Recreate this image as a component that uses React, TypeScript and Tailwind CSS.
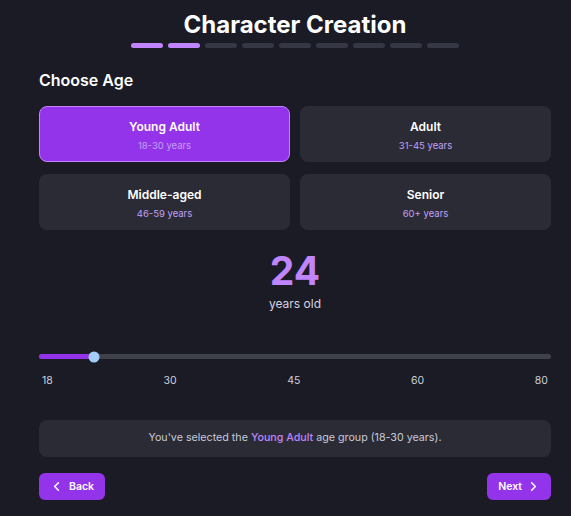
import { ChevronLeft, ChevronRight } from "lucide-react";

const groups = [
  { name: "Young Adult", range: "18-30 years", selected: true },
  { name: "Adult", range: "31-45 years" },
  { name: "Middle-aged", range: "46-59 years" },
  { name: "Senior", range: "60+ years" },
];

const steps = [true, true, false, false, false, false, false, false, false];

export default function App() {
  const age = 24;
  const pct = ((age - 18) / (80 - 18)) * 100 + 1;

  return (
    <div
      className="min-h-[516px] w-full bg-[#1a1b25] text-white"
      style={{ fontFamily: "Inter, 'Noto Sans', sans-serif" }}
    >
      <div className="pl-[39px] pr-[20px] pt-[9px] pb-4">
        <h1 className="text-center text-[24px] font-bold leading-8">Character Creation</h1>
        <div className="mt-[2px] flex justify-center gap-[5px]">
          {steps.map((done, i) => (
            <div
              key={i}
              className={`h-[5px] w-8 rounded-full ${done ? "bg-[#c084fc]" : "bg-[#353844]"}`}
            />
          ))}
        </div>

        <h2 className="mt-[20px] text-[16px] font-semibold leading-6">Choose Age</h2>

        <div className="mt-[14px] grid grid-cols-2 gap-x-[10px] gap-y-[12px]">
          {groups.map((g) => (
            <div
              key={g.name}
              className={`flex h-[56px] flex-col items-center justify-center rounded-lg pt-[3px] ${
                g.selected
                  ? "border border-[#c084fc] bg-[#9333ea]"
                  : "bg-[#2a2b35]"
              }`}
            >
              <div className="text-[12px] font-semibold leading-4">{g.name}</div>
              <div className="mt-[5px] text-[9.5px] leading-3 text-[#c4a1f5]">{g.range}</div>
            </div>
          ))}
        </div>

        <div className="mt-[18px] flex flex-col items-center">
          <div className="text-[39px] font-bold leading-[46px] text-[#c084fc]">{age}</div>
          <div className="mt-[2px] text-[12px] leading-4 text-[#d4d4e0]">years old</div>
        </div>

        <div className="relative mt-[42px] h-[5px] rounded-full bg-[#3f414b]">
          <div
            className="absolute left-0 top-0 h-[5px] rounded-full bg-[#9333ea]"
            style={{ width: `${pct}%` }}
          />
          <div
            className="absolute top-1/2 h-[11px] w-[11px] -translate-x-1/2 -translate-y-1/2 rounded-full bg-[#a5cdfb]"
            style={{ left: `${pct}%` }}
          />
        </div>
        <div className="mt-[16px] flex justify-between px-[3px] text-[10.5px] leading-3 text-[#cfd0dc]">
          <span>18</span>
          <span>30</span>
          <span>45</span>
          <span>60</span>
          <span>80</span>
        </div>

        <div className="mt-[33px] flex h-[37px] items-center justify-center rounded-lg bg-[#2a2b35] text-[10.7px] text-[#c9c9d6]">
          <span>
            You&apos;ve selected the{" "}
            <span className="font-medium text-[#c084fc]">Young Adult</span> age group (18-30
            years).
          </span>
        </div>

        <div className="mt-[16px] flex justify-between">
          <button className="flex h-[27px] items-center gap-[5px] rounded-md bg-[#9333ea] pl-[10px] pr-[11px] text-[10.5px] font-semibold text-white">
            <ChevronLeft size={15} strokeWidth={2.5} />
            Back
          </button>
          <button className="flex h-[27px] items-center gap-[4px] rounded-md bg-[#9333ea] pl-[11px] pr-[10px] text-[10.5px] font-semibold text-white">
            Next
            <ChevronRight size={15} strokeWidth={2.5} />
          </button>
        </div>
      </div>
    </div>
  );
}
